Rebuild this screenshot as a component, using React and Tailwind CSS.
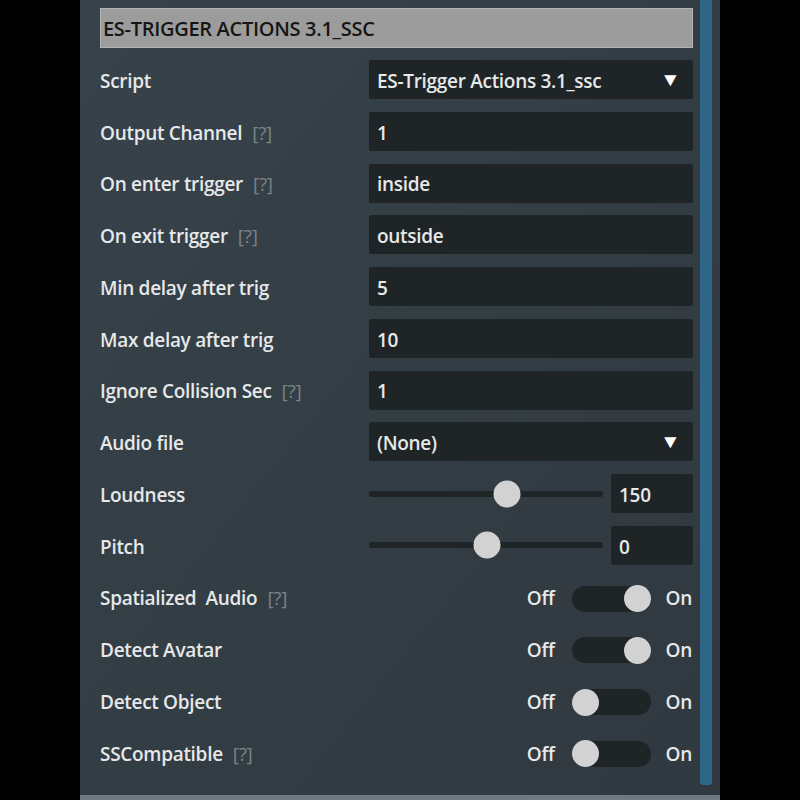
import React from 'react'

const font = { fontFamily: '"Open Sans", "Liberation Sans", Arial, sans-serif' }

const Help = () => <span className="ml-[10px] font-normal text-[#7b8388]">[?]</span>

const Label = ({ text, help }) => (
  <div className="flex items-center whitespace-pre pt-[3px] text-[19px] font-semibold tracking-[-0.3px] text-[#e6e8e9]">
    {text}
    {help && <Help />}
  </div>
)

const Box = ({ children, className = '' }) => (
  <div className={`flex h-[39px] items-center rounded-[2px] bg-[#1f2427] pl-[8px] pr-3 pt-[3px] text-[19px] font-semibold tracking-[-0.3px] text-[#e6e8e9] ${className}`}>
    {children}
  </div>
)

const Caret = () => <span className="ml-auto mb-[3px] mr-[1px] scale-x-110 text-[19px] leading-none text-white">▼</span>

const FieldRow = ({ label, help, value, select }) => (
  <div className="grid h-[39px] grid-cols-[269px_1fr] items-center">
    <Label text={label} help={help} />
    <Box>
      <span>{value}</span>
      {select && <Caret />}
    </Box>
  </div>
)

const SliderRow = ({ label, pos, value }) => (
  <div className="grid h-[39px] grid-cols-[269px_1fr] items-center">
    <Label text={label} />
    <div className="flex items-center">
      <div className="relative h-[6px] w-[234px] rounded-full bg-[#1f2427]">
        <div
          className="absolute top-1/2 h-[27px] w-[27px] -translate-x-1/2 -translate-y-1/2 rounded-full bg-[#d2d2d2]"
          style={{ left: pos }}
        />
      </div>
      <Box className="ml-[8px] w-[82px]">{value}</Box>
    </div>
  </div>
)

const ToggleRow = ({ label, help, on }) => (
  <div className="flex h-[39px] items-center">
    <Label text={label} help={help} />
    <div className="ml-auto flex items-center pt-[3px] text-[19px] font-semibold tracking-[-0.3px] text-[#e6e8e9]">
      <span>Off</span>
      <div className={`ml-[17px] flex h-[26px] w-[79px] items-center rounded-full bg-[#1f2427] ${on ? 'justify-end' : 'justify-start'}`}>
        <div className="h-[27px] w-[27px] rounded-full bg-[#d2d2d2]" />
      </div>
      <span className="ml-[15px] mr-[1px]">On</span>
    </div>
  </div>
)

export default function App() {
  return (
    <div className="flex h-[800px] w-[800px] bg-black" style={font}>
      <div className="ml-[80px] flex w-[640px] flex-col">
        <div className="flex h-[795px] bg-gradient-to-br from-[#37424a] via-[#333d44] to-[#30393f]">
          <div className="flex w-[613px] flex-col gap-[12.75px] pl-[20px] pt-[8px]">
            <div className="mb-[-0.75px] flex h-[40px] items-center border border-[#b4b4b4] bg-[#9c9c9c] pl-[2px] pt-[2px] text-[20px] font-semibold tracking-[-0.3px] text-[#151515]">
              ES-TRIGGER ACTIONS 3.1_SSC
            </div>
            <FieldRow label="Script" value="ES-Trigger Actions 3.1_ssc" select />
            <FieldRow label="Output Channel" help value="1" />
            <FieldRow label="On enter trigger" help value="inside" />
            <FieldRow label="On exit trigger" help value="outside" />
            <FieldRow label="Min delay after trig" value="5" />
            <FieldRow label="Max delay after trig" value="10" />
            <FieldRow label="Ignore Collision Sec" help value="1" />
            <FieldRow label="Audio file" value="(None)" select />
            <SliderRow label="Loudness" pos="138px" value="150" />
            <SliderRow label="Pitch" pos="118px" value="0" />
            <ToggleRow label="Spatialized  Audio" help on />
            <ToggleRow label="Detect Avatar" on />
            <ToggleRow label="Detect Object" />
            <ToggleRow label="SSCompatible" help />
          </div>
          <div className="ml-[7px] h-[785px] w-[12px] rounded-b-[3px] bg-[#2e6688]" />
        </div>
        <div className="h-[5px] bg-[#6f797f]" />
      </div>
    </div>
  )
}
